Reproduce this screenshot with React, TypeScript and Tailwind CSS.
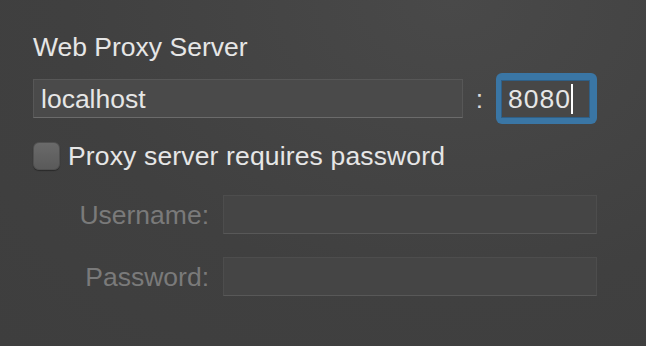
import React, { useState } from 'react';

const font = { fontFamily: '"Liberation Sans", Arial, sans-serif' };

const App: React.FC = () => {
  const [host] = useState('localhost');
  const [port] = useState('8080');
  const [needsPassword, setNeedsPassword] = useState(false);

  return (
    <div
      className="w-[646px] h-[346px] overflow-hidden bg-[radial-gradient(ellipse_at_70%_0%,#494949,#404040_60%,#3e3e3e)] text-[26.5px] leading-[32px] text-[#e6e6e6] pl-[33px] pt-[31px]"
      style={font}
    >
      <div>Web Proxy Server</div>

      {/* host : port */}
      <div className="flex items-center mt-[10px]">
        <div className="w-[430px] h-[39px] bg-[#4a4a4a] border border-[#575757] border-b-[#6b6b6b] pl-[7px] flex items-center">
          {host}
        </div>
        <div className="w-[33px] text-center text-[#dcdcdc]">:</div>
        <div className="rounded-[6px] bg-[#3a76a5] pt-[7px] pb-[6px] pl-[5px] pr-[7px]">
          <div className="w-[89px] h-[38px] bg-[#474747] border border-[#2f5f86] pl-[6px] flex items-center">
            <span className="tracking-[1px]">{port}</span>
            <span className="w-[2px] h-[30px] bg-white" />
          </div>
        </div>
      </div>

      {/* checkbox */}
      <div className="flex items-center mt-[16px]">
        <button
          onClick={() => setNeedsPassword(!needsPassword)}
          className="w-[27px] h-[28px] rounded-[6px] bg-linear-to-b from-[#6a6a6a] to-[#5a5a5a] border border-[#505050] shadow-[0_1px_1px_rgba(0,0,0,0.35)]"
        />
        <span className="ml-[8px] tracking-[0.15px]">Proxy server requires password</span>
      </div>

      {/* credentials */}
      <div className="mt-[23px] flex flex-col gap-[23px]">
        {['Username:', 'Password:'].map(label => (
          <div key={label} className="flex items-center">
            <div className="w-[176px] text-right text-[#7a7a7a]">{label}</div>
            <div className="ml-[14px] w-[374px] h-[39px] bg-[#454545] border border-[#4d4d4d] border-b-[#585858]" />
          </div>
        ))}
      </div>
    </div>
  );
};

export default App;
